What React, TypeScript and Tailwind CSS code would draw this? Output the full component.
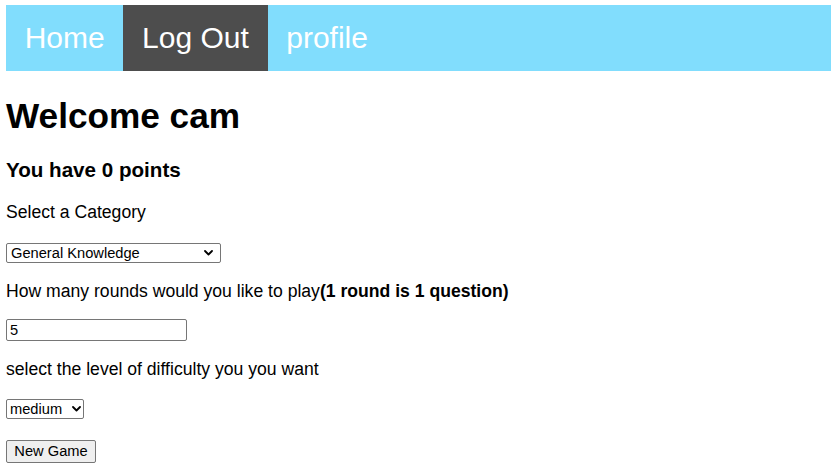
import { useState } from "react";

const categories = [
  "General Knowledge",
  "Entertainment: Books",
  "Entertainment: Film",
  "Entertainment: Music",
  "Science & Nature",
  "Science: Computers",
  "Sports",
  "Geography",
  "History",
];

function Chevron({ className }: { className: string }) {
  return (
    <svg
      className={className}
      width="9"
      height="6"
      viewBox="0 0 9 6"
      fill="none"
      stroke="#000"
      strokeWidth="1.8"
      strokeLinecap="round"
      strokeLinejoin="round"
    >
      <path d="M1 1l3.5 3.5L8 1" />
    </svg>
  );
}

export default function App() {
  const [category, setCategory] = useState(categories[0]);
  const [rounds, setRounds] = useState("5");
  const [level, setLevel] = useState("medium");

  return (
    <div className="min-h-screen bg-white pl-[6px] pt-[5px] font-['Liberation_Sans',Arial,sans-serif] text-black">
      {/* Nav bar */}
      <nav className="flex h-[66px] bg-[#81ddfd] text-[30px] leading-[34px] text-white">
        <a href="#" className="flex items-center px-[18.7px]">
          Home
        </a>
        <a href="#" className="flex items-center bg-[#4d4d4d] px-[18.7px]">
          Log Out
        </a>
        <a href="#" className="flex items-center px-[18.7px]">
          profile
        </a>
      </nav>

      <h1 className="mt-[24.5px] text-[35.2px] font-bold leading-[40px]">Welcome cam</h1>
      <h3 className="mt-[22.4px] text-[20.6px] font-bold leading-[24px]">You have 0 points</h3>

      <p className="mt-[20.3px] text-[17.6px] leading-[20px]">Select a Category</p>
      <div className="relative mt-[20.8px] w-[215px]">
        <select
          value={category}
          onChange={(e) => setCategory(e.target.value)}
          className="block h-[20px] w-full appearance-none rounded-[2px] border border-[#767676] bg-white pl-[4px] text-[14.67px] leading-[18px] text-black"
        >
          {categories.map((c) => (
            <option key={c}>{c}</option>
          ))}
        </select>
        <Chevron className="pointer-events-none absolute right-[8px] top-[7px]" />
      </div>

      <p className="mt-[18.2px] text-[17.6px] leading-[20px]">
        How many rounds would you like to play<b>(1 round is 1 question)</b>
      </p>
      <input
        type="number"
        value={rounds}
        onChange={(e) => setRounds(e.target.value)}
        className="mt-[18.3px] block h-[22px] w-[181px] rounded-[2px] border border-[#767676] bg-white pl-[3px] text-[14.67px] leading-[18px] [appearance:textfield] [&::-webkit-inner-spin-button]:appearance-none"
      />

      <p className="mt-[17.4px] text-[17.6px] leading-[20px]">select the level of difficulty you you want</p>
      <div className="relative mt-[20.1px] w-[78px]">
        <select
          value={level}
          onChange={(e) => setLevel(e.target.value)}
          className="block h-[20px] w-full appearance-none rounded-[2px] border border-[#767676] bg-white pl-[3px] text-[14.67px] leading-[18px] text-black"
        >
          <option>easy</option>
          <option>medium</option>
          <option>hard</option>
        </select>
        <Chevron className="pointer-events-none absolute right-[3px] top-[7px]" />
      </div>

      <button className="mt-[21px] block h-[23px] w-[90px] rounded-[2px] border border-[#767676] bg-[#efefef] text-[14.67px] leading-[18px] text-black">
        New Game
      </button>
    </div>
  );
}
